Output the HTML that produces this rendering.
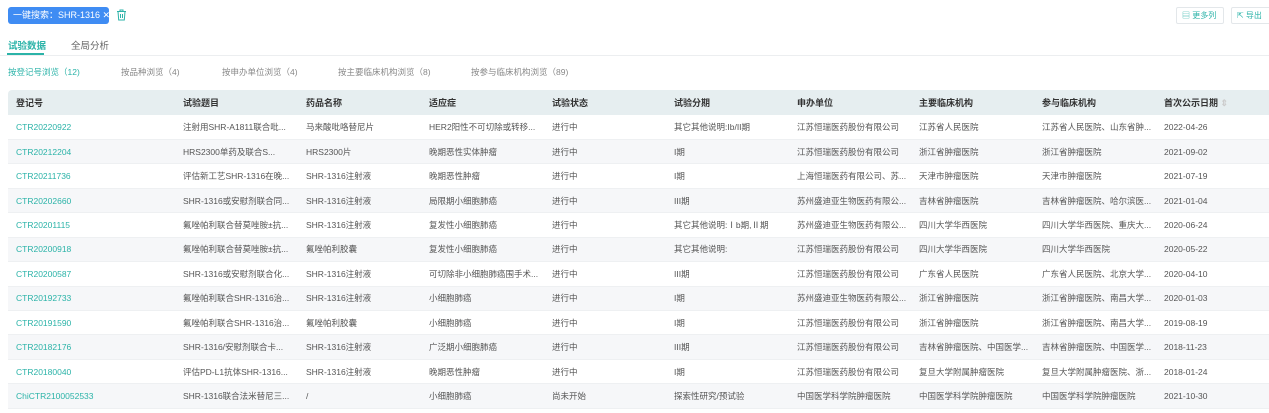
<!DOCTYPE html>
<html><head><meta charset="utf-8"><style>
*{margin:0;padding:0;box-sizing:border-box}
body{width:1269px;height:413px;overflow:hidden;background:#fff;font-family:"Liberation Sans","Noto Sans CJK SC",sans-serif;font-size:9px;color:#555;position:relative}
.a{position:absolute;white-space:nowrap}
.tag{left:8px;top:7px;width:101px;height:17px;background:#3f8cf3;border-radius:3px;color:#fff;font-size:9px;line-height:17px;padding-left:5px}
.btn{top:7px;height:17px;border:1px solid #e3e7ea;border-radius:2px;color:#2bb3a8;font-size:8px;line-height:15px;padding-left:5px}
table{position:absolute;left:8px;top:90px;width:1261px;border-collapse:collapse;table-layout:fixed}
th{height:25px;background:#e6eef0;text-align:left;font-weight:bold;color:#333;font-size:9px;padding-left:8px}
td{height:24.45px;padding-left:8px;font-size:8.5px;color:#555;white-space:nowrap;overflow:hidden;border-bottom:1px solid #eef0f2}
tr:nth-child(odd) td{background:#f6f7f9}
td:first-child{color:#2bb3a8}
th:first-child{border-radius:4px 0 0 0}
.st{top:66px;font-size:8.5px;color:#888}
</style></head><body>
<div class="a tag">一键搜索：SHR-1316 ✕</div>
<svg class="a" style="left:116px;top:9px" width="11" height="12" viewBox="0 0 11 12"><path d="M1 2.5h9M4 2.5V1h3v1.5M2 2.5l.7 8.5h5.6l.7-8.5M4.5 5v4M6.5 5v4" fill="none" stroke="#2bb3a8" stroke-width="1"/></svg>
<div class="a btn" style="left:1176px;width:48px">▤ 更多列</div>
<div class="a btn" style="left:1231px;width:40px">⇱ 导出</div>
<div class="a" style="left:8px;top:38px;font-size:9.5px;color:#2bb3a8;font-weight:bold">试验数据</div>
<div class="a" style="left:71px;top:38px;font-size:9.5px;color:#666">全局分析</div>
<div class="a" style="left:0;top:55px;width:1269px;height:1px;background:#eceef0"></div>
<div class="a" style="left:7px;top:53px;width:37px;height:2px;background:#2bb3a8"></div>
<div class="a st" style="left:8px;color:#2bb3a8">按登记号浏览（12)</div>
<div class="a st" style="left:121px">按品种浏览（4)</div>
<div class="a st" style="left:222px">按申办单位浏览（4)</div>
<div class="a st" style="left:338px">按主要临床机构浏览（8)</div>
<div class="a st" style="left:471px">按参与临床机构浏览（89)</div>
<table>
<colgroup><col style="width:167px"><col style="width:123px"><col style="width:123px"><col style="width:123px"><col style="width:122px"><col style="width:123px"><col style="width:122px"><col style="width:123px"><col style="width:122px"><col></colgroup>
<tr><th>登记号</th><th>试验题目</th><th>药品名称</th><th>适应症</th><th>试验状态</th><th>试验分期</th><th>申办单位</th><th>主要临床机构</th><th>参与临床机构</th><th>首次公示日期 <span style="color:#ccc">⇕</span></th></tr>
<tr><td>CTR20220922</td><td>注射用SHR-A1811联合吡...</td><td>马来酸吡咯替尼片</td><td>HER2阳性不可切除或转移...</td><td>进行中</td><td>其它其他说明:Ib/II期</td><td>江苏恒瑞医药股份有限公司</td><td>江苏省人民医院</td><td>江苏省人民医院、山东省肿...</td><td>2022-04-26</td></tr>
<tr><td>CTR20212204</td><td>HRS2300单药及联合S...</td><td>HRS2300片</td><td>晚期恶性实体肿瘤</td><td>进行中</td><td>I期</td><td>江苏恒瑞医药股份有限公司</td><td>浙江省肿瘤医院</td><td>浙江省肿瘤医院</td><td>2021-09-02</td></tr>
<tr><td>CTR20211736</td><td>评估新工艺SHR-1316在晚...</td><td>SHR-1316注射液</td><td>晚期恶性肿瘤</td><td>进行中</td><td>I期</td><td>上海恒瑞医药有限公司、苏...</td><td>天津市肿瘤医院</td><td>天津市肿瘤医院</td><td>2021-07-19</td></tr>
<tr><td>CTR20202660</td><td>SHR-1316或安慰剂联合同...</td><td>SHR-1316注射液</td><td>局限期小细胞肺癌</td><td>进行中</td><td>III期</td><td>苏州盛迪亚生物医药有限公...</td><td>吉林省肿瘤医院</td><td>吉林省肿瘤医院、哈尔滨医...</td><td>2021-01-04</td></tr>
<tr><td>CTR20201115</td><td>氟唑帕利联合替莫唑胺±抗...</td><td>SHR-1316注射液</td><td>复发性小细胞肺癌</td><td>进行中</td><td>其它其他说明:Ⅰb期,Ⅱ期</td><td>苏州盛迪亚生物医药有限公...</td><td>四川大学华西医院</td><td>四川大学华西医院、重庆大...</td><td>2020-06-24</td></tr>
<tr><td>CTR20200918</td><td>氟唑帕利联合替莫唑胺±抗...</td><td>氟唑帕利胶囊</td><td>复发性小细胞肺癌</td><td>进行中</td><td>其它其他说明:</td><td>江苏恒瑞医药股份有限公司</td><td>四川大学华西医院</td><td>四川大学华西医院</td><td>2020-05-22</td></tr>
<tr><td>CTR20200587</td><td>SHR-1316或安慰剂联合化...</td><td>SHR-1316注射液</td><td>可切除非小细胞肺癌围手术...</td><td>进行中</td><td>III期</td><td>江苏恒瑞医药股份有限公司</td><td>广东省人民医院</td><td>广东省人民医院、北京大学...</td><td>2020-04-10</td></tr>
<tr><td>CTR20192733</td><td>氟唑帕利联合SHR-1316治...</td><td>SHR-1316注射液</td><td>小细胞肺癌</td><td>进行中</td><td>I期</td><td>苏州盛迪亚生物医药有限公...</td><td>浙江省肿瘤医院</td><td>浙江省肿瘤医院、南昌大学...</td><td>2020-01-03</td></tr>
<tr><td>CTR20191590</td><td>氟唑帕利联合SHR-1316治...</td><td>氟唑帕利胶囊</td><td>小细胞肺癌</td><td>进行中</td><td>I期</td><td>江苏恒瑞医药股份有限公司</td><td>浙江省肿瘤医院</td><td>浙江省肿瘤医院、南昌大学...</td><td>2019-08-19</td></tr>
<tr><td>CTR20182176</td><td>SHR-1316/安慰剂联合卡...</td><td>SHR-1316注射液</td><td>广泛期小细胞肺癌</td><td>进行中</td><td>III期</td><td>江苏恒瑞医药股份有限公司</td><td>吉林省肿瘤医院、中国医学...</td><td>吉林省肿瘤医院、中国医学...</td><td>2018-11-23</td></tr>
<tr><td>CTR20180040</td><td>评估PD-L1抗体SHR-1316...</td><td>SHR-1316注射液</td><td>晚期恶性肿瘤</td><td>进行中</td><td>I期</td><td>江苏恒瑞医药股份有限公司</td><td>复旦大学附属肿瘤医院</td><td>复旦大学附属肿瘤医院、浙...</td><td>2018-01-24</td></tr>
<tr><td>ChiCTR2100052533</td><td>SHR-1316联合法米替尼三...</td><td>/</td><td>小细胞肺癌</td><td>尚未开始</td><td>探索性研究/预试验</td><td>中国医学科学院肿瘤医院</td><td>中国医学科学院肿瘤医院</td><td>中国医学科学院肿瘤医院</td><td>2021-10-30</td></tr>
</table>
</body></html>
